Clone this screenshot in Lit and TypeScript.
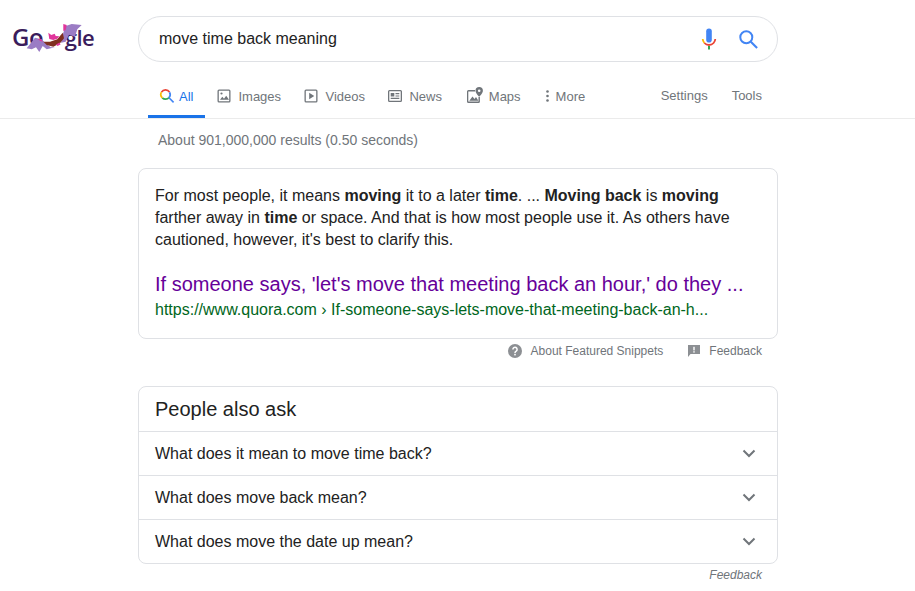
import { LitElement, html, css, svg } from 'lit';
import { customElement } from 'lit/decorators.js';

const ICON_COLOR = '#70757a';

const ICONS = {
  all: svg`<svg class="ic" width="16" height="16" viewBox="0 0 16 16" fill="none" stroke-width="1.7">
    <path d="M2.500 4.100A4.600 4.600 0 0 1 10.500 4.200" stroke="#ea4335"/>
    <path d="M10.500 4.200A4.600 4.600 0 0 1 10 9.600" stroke="#4285f4"/>
    <path d="M10 9.600A4.600 4.600 0 0 1 3.300 9.800" stroke="#34a853"/>
    <path d="M3.300 9.800A4.600 4.600 0 0 1 2.500 4.100" stroke="#fbbc05"/>
    <path d="M10 9.800l4.600 4.600" stroke="#4285f4" stroke-width="1.600"/>
  </svg>`,
  images: svg`<svg class="ic" width="16" height="16" viewBox="0 0 16 16">
    <path fill=${ICON_COLOR} d="M3 1.5h10A1.5 1.5 0 0 1 14.5 3v10a1.500 1.500 0 0 1-1.500 1.500H3A1.500 1.500 0 0 1 1.500 13V3A1.500 1.500 0 0 1 3 1.500zm0 1.300a.2.2 0 0 0-.2.2v10c0 .1.100.2.2.2h10a.2.2 0 0 0 .2-.2V3a.2.2 0 0 0-.2-.2z"/>
    <path fill=${ICON_COLOR} d="M4 11.800l2.300-3 1.700 2 2.200-3 2.800 4z"/><circle cx="5.500" cy="5.500" r="1.100" fill=${ICON_COLOR}/>
  </svg>`,
  videos: svg`<svg class="ic" width="16" height="16" viewBox="0 0 16 16">
    <path fill=${ICON_COLOR} d="M3 1.500h10A1.500 1.500 0 0 1 14.500 3v10a1.500 1.500 0 0 1-1.500 1.500H3A1.500 1.500 0 0 1 1.500 13V3A1.500 1.500 0 0 1 3 1.500zm0 1.300a.2.2 0 0 0-.2.2v10c0 .1.100.2.2.2h10a.2.2 0 0 0 .2-.2V3a.2.2 0 0 0-.2-.2z"/>
    <path fill=${ICON_COLOR} d="M6.200 4.800l5 3.200-5 3.200z"/>
  </svg>`,
  news: svg`<svg class="ic" width="16" height="16" viewBox="0 0 16 16">
    <path fill=${ICON_COLOR} d="M2.500 2h11A1.500 1.500 0 0 1 15 3.500v9a1.500 1.500 0 0 1-1.500 1.500h-11A1.500 1.500 0 0 1 1 12.500v-9A1.500 1.500 0 0 1 2.500 2zm0 1.300a.2.2 0 0 0-.2.2v9c0 .1.100.2.2.2h11a.2.2 0 0 0 .2-.2v-9a.2.2 0 0 0-.2-.2z"/>
    <path fill=${ICON_COLOR} d="M3.700 5h3.600v3.600H3.700zM8.500 5h3.800v1.200H8.500zM8.500 7.400h3.800v1.200H8.500zM3.700 9.800h8.600V11H3.700z"/>
  </svg>`,
  maps: svg`<svg class="ic maps" width="18" height="18" viewBox="0 0 18 18">
    <path fill=${ICON_COLOR} d="M2.500 4H9v1.400H2.500a.2.2 0 0 0-.2.2v9.800c0 .1.100.2.2.2h9.800a.2.2 0 0 0 .2-.2V11h1.400v4.500a1.500 1.500 0 0 1-1.500 1.500H2.500A1.500 1.500 0 0 1 1 15.500v-10A1.500 1.500 0 0 1 2.500 4z"/>
    <path fill=${ICON_COLOR} d="M3.300 14.800l3.200-4.300 2 2.400 1.500-1.900 2.400 3.800z"/>
    <path fill=${ICON_COLOR} d="M13.200 1A3.700 3.700 0 0 0 9.500 4.700c0 2.600 3.700 6 3.700 6s3.700-3.400 3.700-6A3.700 3.700 0 0 0 13.200 1zm0 5a1.300 1.300 0 1 1 0-2.600 1.300 1.300 0 0 1 0 2.600z"/>
  </svg>`,
  more: svg`<svg class="ic more" width="5" height="16" viewBox="0 0 5 16">
    <circle cx="2.500" cy="3.500" r="1.300" fill=${ICON_COLOR}/><circle cx="2.500" cy="8" r="1.300" fill=${ICON_COLOR}/><circle cx="2.500" cy="12.500" r="1.300" fill=${ICON_COLOR}/>
  </svg>`,
};

const MIC = svg`<svg width="24" height="24" viewBox="0 0 24 24" fill="none">
  <rect x="9.200" y="1.500" width="5.600" height="14" rx="2.800" fill="#4285f4"/>
  <path d="M5.700 12a6.300 6.300 0 0 0 1.700 4" stroke="#fbbc05" stroke-width="1.800"/>
  <path d="M7.400 16a6.300 6.300 0 0 0 9.200 0 6.300 6.300 0 0 0 1.700-4" stroke="#ea4335" stroke-width="1.800"/>
  <rect x="11" y="19" width="2" height="3.500" fill="#34a853"/>
</svg>`;

const LENS = svg`<svg width="24" height="24" viewBox="0 0 24 24" fill="none" stroke="#4285f4">
  <circle cx="10.300" cy="10.300" r="6" stroke-width="2"/>
  <path d="M14.800 14.800l6.300 6.300" stroke-width="2.100"/>
</svg>`;

const CHEVRON = svg`<svg class="chev" width="14" height="9" viewBox="0 0 14 9" fill="none">
  <path d="M1.500 1.500L7 7l5.500-5.500" stroke="#70757a" stroke-width="2"/>
</svg>`;

const TABS = [
  { label: 'Images', icon: ICONS.images, cls: '' },
  { label: 'Videos', icon: ICONS.videos, cls: '' },
  { label: 'News', icon: ICONS.news, cls: '' },
  { label: 'Maps', icon: ICONS.maps, cls: 'wide' },
  { label: 'More', icon: ICONS.more, cls: '' },
];

const QUESTIONS = [
  'What does it mean to move time back?',
  'What does move back mean?',
  'What does move the date up mean?',
];

@customElement('app-root')
export class AppRoot extends LitElement {
  static override styles = css`
    :host {
      display: block;
      width: 915px;
      height: 591px;
      overflow: hidden;
      background: #fff;
      font-family: 'Liberation Sans', Arial, sans-serif;
      color: #222;
    }

    .top { display: flex; padding-top: 16px; }

    .logo {
      position: relative;
      width: 126px;
      height: 46px;
      margin-left: 12px;
      flex: none;
      color: #3a1c5c;
      font-family: 'Open Sans', sans-serif;
      font-weight: 600;
      font-size: 24px;
      line-height: 32px;
      letter-spacing: -0.3px;
    }
    .logo-text { position: absolute; left: 0; top: 5px; white-space: nowrap; }
    .logo-text .hid { color: transparent; margin-right: 7px; }
    .logo-text .low { font-size: 22px; letter-spacing: -0.6px; }
    .bat { position: absolute; left: 0; top: 0; }

    .search {
      width: 640px;
      height: 46px;
      box-sizing: border-box;
      border: 1px solid #dfe1e5;
      border-radius: 23px;
      display: flex;
      align-items: center;
      padding: 0 17px 0 20px;
      font-size: 16px;
    }
    .search .q { flex: 1; color: #222; }
    .search svg { display: block; }
    .search .mic { margin-right: 15px; }

    .tabs {
      display: flex;
      height: 57px;
      box-sizing: border-box;
      border-bottom: 1px solid #ebebeb;
      padding: 0 153px 0 148px;
      font-size: 13px;
      color: #70757a;
    }
    .tab {
      display: flex;
      align-items: center;
      gap: 6px;
      padding: 12px 11px 0;
      margin-right: 0.400px;
      height: 44px;
    }
    .tab.active {
      color: #1a73e8;
      border-bottom: 3px solid #1a73e8;
      gap: 4px;
      padding: 15px 12px 0 11px;
      height: 38px;
      margin-right: 0;
    }
    .tab.wide { margin: 0 2px 0 1.500px; }
    .tab .ic { display: block; }
    .tab .maps { margin: -3px -1px 0 0; }
    .spacer { flex: 1; }
    .tool { display: flex; align-items: center; height: 56px; padding-top: 10px; box-sizing: border-box; }
    .tool + .tool { margin-left: 24px; }

    .stats {
      margin: 13px 0 0 158px;
      height: 16px;
      line-height: 16px;
      font-size: 14px;
      color: #70757a;
    }

    .column { width: 640px; margin-left: 138px; }

    .card {
      border: 1px solid #dfe1e5;
      border-radius: 8px;
      box-sizing: border-box;
    }

    .snippet {
      margin-top: 20px;
      height: 171px;
      padding: 16px 16px 0;
    }
    .snippet p {
      margin: 0;
      font-size: 16px;
      line-height: 22px;
      color: #222;
    }
    .snippet b { color: #222; }
    .title {
      margin-top: 20px;
      font-size: 20px;
      line-height: 26px;
      color: #609;
      white-space: nowrap;
    }
    .url {
      margin-top: 2px;
      font-size: 16px;
      line-height: 22px;
      color: #006621;
      white-space: nowrap;
    }

    .snippet-foot {
      display: flex;
      justify-content: flex-end;
      align-items: center;
      height: 23px;
      padding-right: 16px;
      font-size: 12px;
      color: #70757a;
    }
    .snippet-foot svg { display: block; }
    .snippet-foot .about { margin: 0 9px 0 0; }
    .snippet-foot .flag { margin: 0 9px 0 25px; }

    .paa { margin-top: 24px; }
    .paa h2 {
      margin: 0;
      height: 44px;
      padding: 0 16px;
      line-height: 45px;
      font-size: 20px;
      font-weight: 400;
      box-sizing: border-box;
    }
    .q-row {
      display: flex;
      align-items: center;
      justify-content: space-between;
      height: 44px;
      box-sizing: border-box;
      padding: 0 21px 0 16px;
      border-top: 1px solid #dfe1e5;
      font-size: 16px;
      color: #222;
    }
    .chev { display: block; }

    .paa-foot {
      text-align: right;
      padding: 3px 16px 0 0;
      font-size: 12px;
      line-height: 16px;
      font-style: italic;
      color: #70757a;
    }
  `;

  private renderLogo() {
    // the bat doodle sits where the second o would be, so that o stays in the text but unpainted
    return html`<div class="logo">
      <span class="logo-text">Go<span class="hid">o</span><span class="low">gle</span></span>
      <svg class="bat" width="90" height="46" viewBox="0 0 90 46">
        <path fill="#9b7cc4" d="M14.700 32.300L23 21.700l6.700 1.600 3.300 3.400 5.700 4.600H43l-8.300 2-4-3.300-3.400 6-3.300-4.700-4.300 2z"/>
        <path fill="#9b7cc4" d="M49 26.700l2.300-10 2.400-6.700 6-2 10 1-4.400 4.300-2.300 7.400-6-2-3.300 7z"/>
        <path fill="#7f2f1f" d="M31.300 25.700L38 25.700l7.300-2.400 5.400-6.600 1.300 5.600-4 5-6.700 3.400-6.600-1.700z"/>
        <path fill="#e0359b" d="M36.300 16.700l3 2.300 3.400-1.300 1 2.300 3.600.3-2 2.400-4 1.200-4-1zM51.300 8l3.400 1-1 5-2.400 1zM25.700 23.300l3.300-.4 2 2.800-2.500-.6zM44 28.500l3.500-2 1 2-3 1.500z"/>
      </svg>
    </div>`;
  }

  override render() {
    return html`
      <div class="top">
        ${this.renderLogo()}
        <div class="search">
          <span class="q">move time back meaning</span>
          <span class="mic">${MIC}</span>
          ${LENS}
        </div>
      </div>
      <nav class="tabs">
        <div class="tab active">${ICONS.all}<span>All</span></div>
        ${TABS.map((t) => html`<div class="tab ${t.cls}">${t.icon}<span>${t.label}</span></div>`)}
        <div class="spacer"></div>
        <div class="tool">Settings</div>
        <div class="tool">Tools</div>
      </nav>
      <div class="stats">About 901,000,000 results (0.50 seconds)</div>
      <div class="column">
        <section class="card snippet">
          <p>For most people, it means <b>moving</b> it to a later <b>time</b>. ... <b>Moving back</b> is <b>moving</b>
          farther away in <b>time</b> or space. And that is how most people use it. As others have
          cautioned, however, it's best to clarify this.</p>
          <div class="title">If someone says, 'let's move that meeting back an hour,' do they ...</div>
          <div class="url">https://www.quora.com › If-someone-says-lets-move-that-meeting-back-an-h...</div>
        </section>
        <div class="snippet-foot">
          <svg class="about" width="14" height="14" viewBox="0 0 14 14">
            <circle cx="7" cy="7" r="7" fill="#8c8f93"/>
            <path fill="none" stroke="#fff" stroke-width="1.500" d="M4.900 5.400a2.100 2.100 0 1 1 3.300 1.700c-.8.500-1.200 1-1.200 1.800"/>
            <rect x="6.200" y="9.800" width="1.600" height="1.600" fill="#fff"/>
          </svg>
          <span>About Featured Snippets</span>
          <svg class="flag" width="12" height="12" viewBox="0 0 12 12">
            <path fill="#8c8f93" d="M0 0h12v9H2.500L0 12z"/>
            <rect x="5.300" y="1.800" width="1.400" height="3.600" fill="#fff"/>
            <rect x="5.300" y="6.200" width="1.400" height="1.400" fill="#fff"/>
          </svg>
          <span>Feedback</span>
        </div>
        <section class="card paa">
          <h2>People also ask</h2>
          ${QUESTIONS.map((q) => html`<div class="q-row"><span>${q}</span>${CHEVRON}</div>`)}
        </section>
        <div class="paa-foot">Feedback</div>
      </div>
    `;
  }
}
